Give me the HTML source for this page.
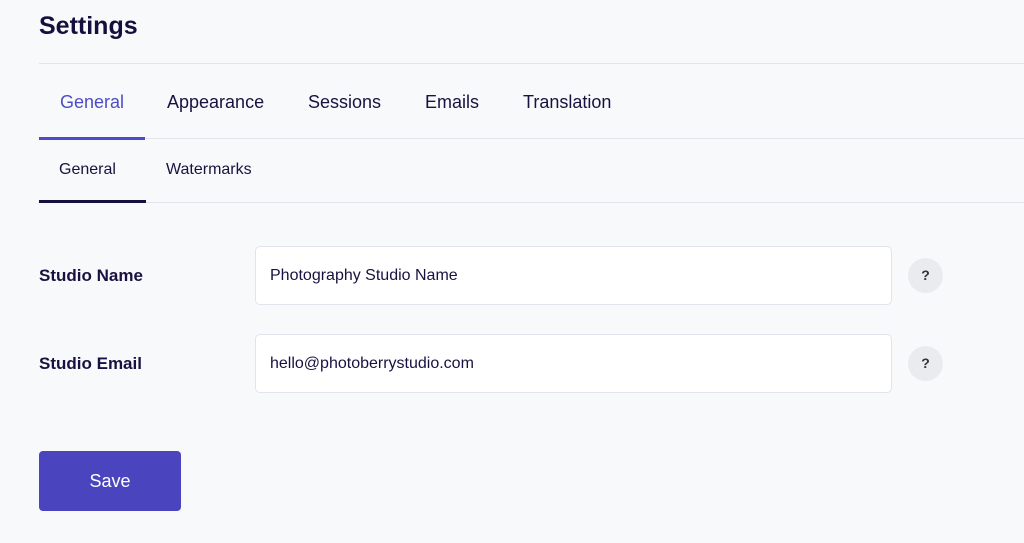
<!DOCTYPE html>
<html><head><style>
*{margin:0;padding:0;box-sizing:border-box}
body{width:1024px;height:543px;background:#f8f9fb;font-family:"Liberation Sans",sans-serif;color:#1a1140;position:relative;overflow:hidden}
.a{position:absolute}
h1{position:absolute;left:39px;top:12px;font-size:25px;font-weight:bold;color:#160f3d}
.line{position:absolute;left:39px;right:0;height:1px;background:#e4e5ea}
.t{position:absolute;font-size:18px;top:92px}
.s{position:absolute;font-size:16px;top:161px}
.lbl{position:absolute;left:39px;font-size:17px;font-weight:bold}
.in{position:absolute;left:255px;width:637px;height:59px;background:#fff;border:1px solid #e3e3ee;border-radius:5px;font-size:16px;padding:0 0 0 14px;line-height:57px}
.q{position:absolute;left:908px;width:35px;height:35px;border-radius:50%;background:#e9ebee;color:#333;font-weight:bold;font-size:14px;text-align:center;line-height:35px}
</style></head><body>
<h1>Settings</h1>
<div class="line" style="top:63px"></div>
<div class="t" style="left:60px;color:#4f4bc8">General</div>
<div class="t" style="left:167px">Appearance</div>
<div class="t" style="left:308px">Sessions</div>
<div class="t" style="left:425px">Emails</div>
<div class="t" style="left:523px">Translation</div>
<div class="line" style="top:138px"></div>
<div class="a" style="left:39px;top:137px;width:106px;height:3px;background:#4f4bc8"></div>
<div class="s" style="left:59px">General</div>
<div class="s" style="left:166px">Watermarks</div>
<div class="line" style="top:202px"></div>
<div class="a" style="left:39px;top:200px;width:107px;height:3px;background:#160f3d"></div>
<div class="lbl" style="top:266px">Studio Name</div>
<div class="in" style="top:246px">Photography Studio Name</div>
<div class="q" style="top:258px">?</div>
<div class="lbl" style="top:354px">Studio Email</div>
<div class="in" style="top:334px">hello@photoberrystudio.com</div>
<div class="q" style="top:346px">?</div>
<div class="a" style="left:39px;top:451px;width:142px;height:60px;background:#4a45bf;border-radius:4px;color:#fff;font-size:18px;text-align:center;line-height:60px">Save</div>
</body></html>
